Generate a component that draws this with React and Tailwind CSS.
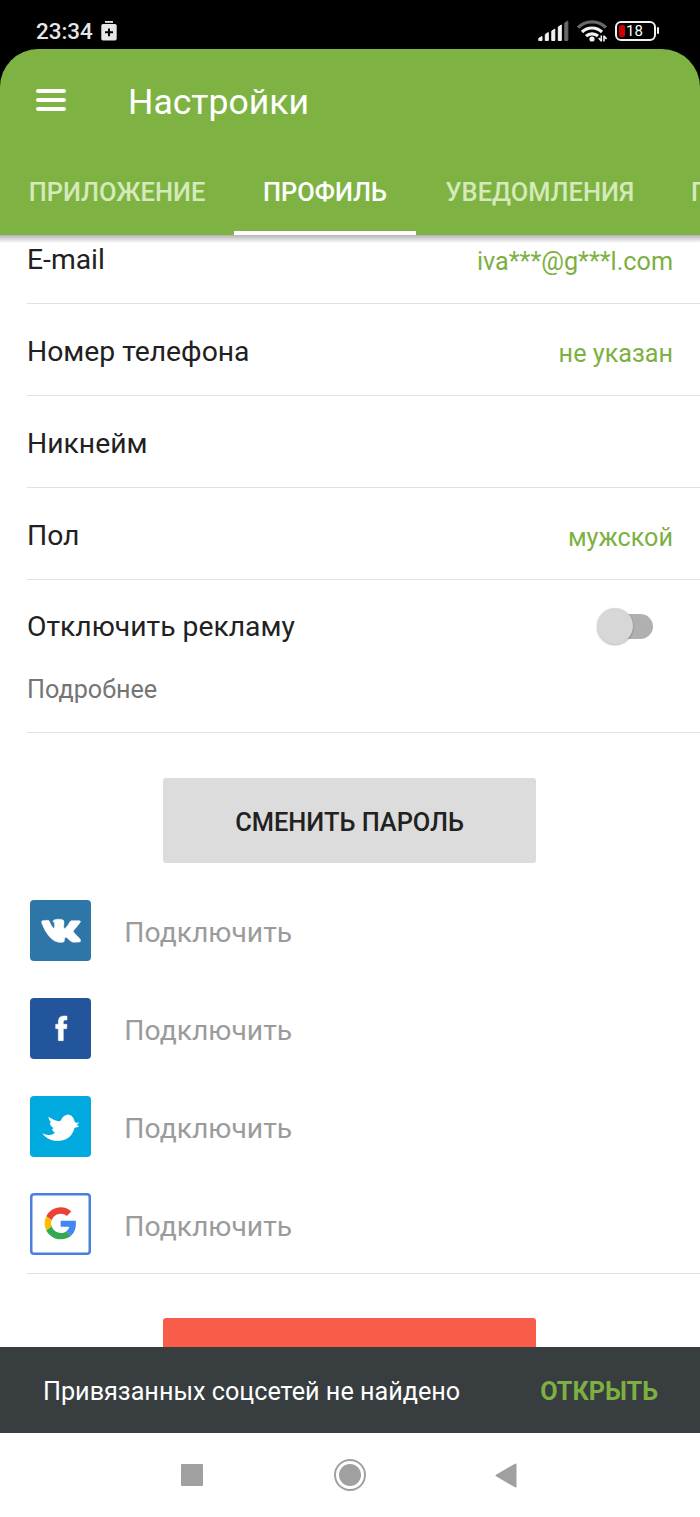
import { useState } from "react";
import clsx from "clsx";

const tabs = [
  { key: "app", label: "ПРИЛОЖЕНИЕ", className: "w-[234px]" },
  { key: "profile", label: "ПРОФИЛЬ", className: "w-[182px]" },
  { key: "notifications", label: "УВЕДОМЛЕНИЯ", className: "w-[248px]" },
  { key: "subscription", label: "ПОДПИСКА", className: "w-[194px]" },
];

const rows = [
  { label: "Номер телефона", value: "не указан" },
  { label: "Никнейм", value: "" },
  { label: "Пол", value: "мужской" },
];

const socials = [
  { key: "vk", Icon: VkIcon, className: "bg-[#2f76a8]" },
  { key: "facebook", Icon: FacebookIcon, className: "bg-[#22559c]" },
  { key: "twitter", Icon: TwitterIcon, className: "bg-[#00aade]" },
  { key: "google", Icon: GoogleIcon, className: "bg-white inset-ring-[2.5px] inset-ring-[#4a80d9]" },
];

export default function App() {
  const [tab, setTab] = useState("profile");

  return (
    <div className="flex h-[1517px] w-[700px] flex-col overflow-hidden bg-white font-['Roboto','Noto_Sans',sans-serif] text-[#212121]">
      <div className="bg-black">
        <StatusBar />
        <header className="h-[186px] rounded-t-[38px] bg-[#7eb343]">
          <div className="flex h-[101px] items-center pl-9 text-white">
            <button aria-label="Меню" className="flex w-[30px] flex-col gap-[5px]">
              <span className="h-1 rounded-full bg-white" />
              <span className="h-1 rounded-full bg-white" />
              <span className="h-1 rounded-full bg-white" />
            </button>
            <h1 className="ml-[62px] pt-1 text-[35.6px] leading-10">Настройки</h1>
          </div>
          <nav className="flex h-[85px] overflow-hidden">
            {tabs.map((t) => (
              <button
                key={t.key}
                onClick={() => setTab(t.key)}
                className={clsx(
                  "shrink-0 border-b-4 pt-1 text-[25.4px] font-medium",
                  t.className,
                  tab === t.key ? "border-white text-white" : "border-transparent text-[#d5eab9]",
                )}
              >
                {t.label}
              </button>
            ))}
          </nav>
        </header>
      </div>

      <main className="flex h-[1112px] flex-col overflow-hidden">
        <div className="h-2 shrink-0 bg-linear-to-b from-[#b4b4b4] to-white" />
        <div className="ml-[27px] flex h-[61px] shrink-0 justify-between border-b border-[#e2e2e2] pr-[27px] pt-px">
          <span className="text-[28.3px] leading-8">E-mail</span>
          <span className="pt-0.5 text-[25.2px] leading-8 text-[#7cb042]">iva***@g***l.com</span>
        </div>
        {rows.map((r) => <SettingRow key={r.label} {...r} />)}
        <AdsRow />

        <button className="ml-[163px] mt-[45px] h-[85px] w-[373px] shrink-0 rounded-[3px] bg-[#dcdcdc] pt-1 text-[25.4px] font-medium">
          СМЕНИТЬ ПАРОЛЬ
        </button>

        <div className="ml-[27px] mt-[37px] flex shrink-0 flex-col gap-[36.6px] border-b border-[#e2e2e2] pb-[18px] pl-[3px]">
          {socials.map(({ key, Icon, className }) => (
            <div key={key} className="flex items-center">
              <span className={clsx("size-[61.3px] overflow-hidden rounded-[4px]", className)}>
                <Icon />
              </span>
              <span className="ml-[33px] pt-1.5 text-[28.3px] leading-8 text-[#9b9b9b]">Подключить</span>
            </div>
          ))}
        </div>

        <button className="ml-[163px] mt-11 h-[85px] w-[373px] shrink-0 rounded-[3px] bg-[#f95d49]" />
      </main>

      <div className="flex h-[86px] shrink-0 items-center justify-between bg-[#383d3f] pl-[43px] pr-[42px] pt-1 text-[25.2px]">
        <span className="text-white">Привязанных соцсетей не найдено</span>
        <button className="font-bold text-[#7cb042]">ОТКРЫТЬ</button>
      </div>
      <NavBar />
    </div>
  );
}

function SettingRow({ label, value }) {
  return (
    <div className="ml-[27px] flex h-[92.1px] shrink-0 items-center justify-between border-b border-[#e2e2e2] pr-[27px]">
      <span className="pt-1 text-[28.3px] leading-8">{label}</span>
      <span className="pt-2 text-[25.2px] leading-8 text-[#7cb042]">{value}</span>
    </div>
  );
}

function AdsRow() {
  const [on, setOn] = useState(false);
  return (
    <div className="ml-[27px] h-[152.5px] shrink-0 border-b border-[#e2e2e2] pr-[47px] pt-[27px]">
      <div className="flex h-[40px] items-center justify-between">
        <span className="text-[28.3px] leading-8">Отключить рекламу</span>
        <button
          role="switch"
          aria-checked={on}
          aria-label="Отключить рекламу"
          onClick={() => setOn(!on)}
          className="flex h-[25px] w-[50px] -translate-y-px items-center rounded-full bg-[#b0b0b0]"
        >
          <span
            className={clsx(
              "size-9 shrink-0 rounded-full bg-[#d7d7d7] shadow-[0_1px_2px_rgba(0,0,0,0.3)]",
              on ? "translate-x-5" : "-translate-x-[6px]",
            )}
          />
        </button>
      </div>
      <p className="pt-[27px] text-[25.2px] leading-8 text-[#757575]">Подробнее</p>
    </div>
  );
}

function StatusBar() {
  return (
    <div className="flex h-[49px] items-center justify-between pl-9 pr-[41px] pt-3 text-[#e6e6ea]">
      <div className="flex items-center gap-2">
        <span className="text-[22.4px] leading-8 font-medium">23:34</span>
        <svg width="16" height="20" viewBox="0 0 16 20" fill="currentColor">
          <path d="M4 0h8v1.8H4z" />
          <path fillRule="evenodd" d="M2 3h12a1.7 1.7 0 0 1 1.7 1.7v13A1.7 1.7 0 0 1 14 19.4H2a1.7 1.7 0 0 1-1.7-1.7v-13A1.7 1.7 0 0 1 2 3zm5 4.4v2.900H4v2h3v2.900h2v-2.900h3v-2H9V7.400z" />
        </svg>
      </div>
      <div className="flex items-center gap-2">
        {/* signal strength */}
        <svg width="31" height="22" viewBox="0 0 31 22" fill="#f2f2f2" stroke="#f2f2f2" strokeWidth="1" strokeLinejoin="round">
          <path d="M.8 18.300l3.200-1.800v4H.8zM7.300 14.500l3-2v8h-3zM13.800 11l3-2v11.500h-3zM20.300 7l3-2v15.500h-3z" />
          <path d="M26.800 3l3-2v19.500h-3z" fill="#68686a" stroke="#68686a" />
        </svg>
        {/* wi-fi with traffic arrows */}
        <svg width="30" height="22" viewBox="0 0 30 22" fill="none" strokeWidth="3.200">
          <path d="M1 7.500a20 20 0 0 1 28 0" stroke="#68686a" />
          <path d="M5 12a14.500 14.500 0 0 1 20 0" stroke="#f2f2f2" />
          <path d="M9 16.200a9 9 0 0 1 12-.2" stroke="#f2f2f2" />
          <circle cx="15" cy="19" r="2.600" fill="#f2f2f2" />
          <path d="M24.300 15.500V21.500M24.300 21l-2.600-3M27 21.500V15.500M27 16l2.500 3" stroke="#f2f2f2" strokeWidth="1.600" />
        </svg>
        <div className="flex items-center gap-[1.500px]">
          <div className="flex h-5 w-[41px] items-center rounded-[6px] border-2 border-[#f2f2f2] pl-[2px]">
            <span className="h-3 w-[6px] rounded-[2px] bg-[#d40000]" />
            <span className="ml-[1.500px] text-[15px] leading-4 text-white">18</span>
          </div>
          <span className="h-[7px] w-0.5 rounded-full bg-[#f2f2f2]" />
        </div>
      </div>
    </div>
  );
}

function NavBar() {
  return (
    <div className="flex h-[84px] shrink-0 items-center justify-between bg-white pl-[181px] pr-[183px] text-[#a0a0a0]">
      <span className="size-[22px] rounded-[1px] bg-current" />
      <span className="ml-0.5 flex size-8 items-center justify-center rounded-full border-2 border-current">
        <span className="size-[22px] rounded-full bg-current" />
      </span>
      <svg width="22" height="25" viewBox="0 0 22 25" fill="currentColor" stroke="currentColor" strokeWidth="2" strokeLinejoin="round">
        <path d="M1.500 12.500 20.500 1.500v22z" />
      </svg>
    </div>
  );
}

function VkIcon() {
  return (
    <svg viewBox="30 29 184 184" fill="#fff" stroke="#fff" strokeWidth="1.500">
      <path d="M67 91 84 90Q87 90 88 93 95 110 101 114 104 114 104 105 104 94 98 93 102 87 112 87 124 86 129 89 133 91 132 98L131 110Q132 117 136 114 144 106 150 94 152 91 155 91L178 91Q184 91 180 97 172 108 162 119 158 123 162 127 172 136 181 147 184 155 178 155L160 156Q154 155 148 149 140 139 136 141 133 143 133 152 132 156 127 156 105 158 90 141 74 123 65 97 64 92 67 91z" />
    </svg>
  );
}

function FacebookIcon() {
  return (
    <svg viewBox="30 324 184 184" fill="#fff" stroke="#fff" strokeWidth="1.500">
      <path d="M115 452V416H107V403H115V396Q115 378 131 378H141V390H135Q130 390 130 396V403H141L140 416H130V452z" />
    </svg>
  );
}

function TwitterIcon() {
  return (
    <svg viewBox="30 31 184 184" fill="#fff">
      <path d="M67 143Q76 149 90 148 99 147 105 141 97 138 96 130L101 128Q91 122 89 112L93 110Q86 102 85 93 100 103 116 107 121 107 123 104 128 90 140 88L148 86 147 89 153 89Q162 96 164 108L170 112 178 110Q174 117 169 118L178 121Q172 126 164 126 158 150 138 161 115 170 92 162 75 156 67 143z" />
    </svg>
  );
}

function GoogleIcon() {
  return (
    <svg viewBox="-22 -21.500 92 92">
      <path fill="#ea4335" d="M24 9.500c3.540 0 6.710 1.220 9.210 3.600l6.850-6.850C35.900 2.380 30.470 0 24 0 14.620 0 6.510 5.380 2.560 13.220l7.980 6.190C12.430 13.720 17.740 9.500 24 9.500z" />
      <path fill="#4285f4" d="M46.980 24.550c0-1.570-.15-3.090-.38-4.550H24v9.020h12.940c-.58 2.960-2.260 5.480-4.780 7.180l7.730 6c4.510-4.180 7.090-10.360 7.090-17.650z" />
      <path fill="#fbbc05" d="M10.530 28.590c-.48-1.450-.76-2.990-.76-4.590s.27-3.140.76-4.590l-7.980-6.190C.920 16.460 0 20.120 0 24c0 3.880.92 7.540 2.560 10.780l7.970-6.190z" />
      <path fill="#34a853" d="M24 48c6.480 0 11.930-2.130 15.890-5.810l-7.730-6c-2.150 1.450-4.920 2.300-8.160 2.300-6.260 0-11.570-4.220-13.470-9.910l-7.980 6.190C6.510 42.620 14.620 48 24 48z" />
    </svg>
  );
}
